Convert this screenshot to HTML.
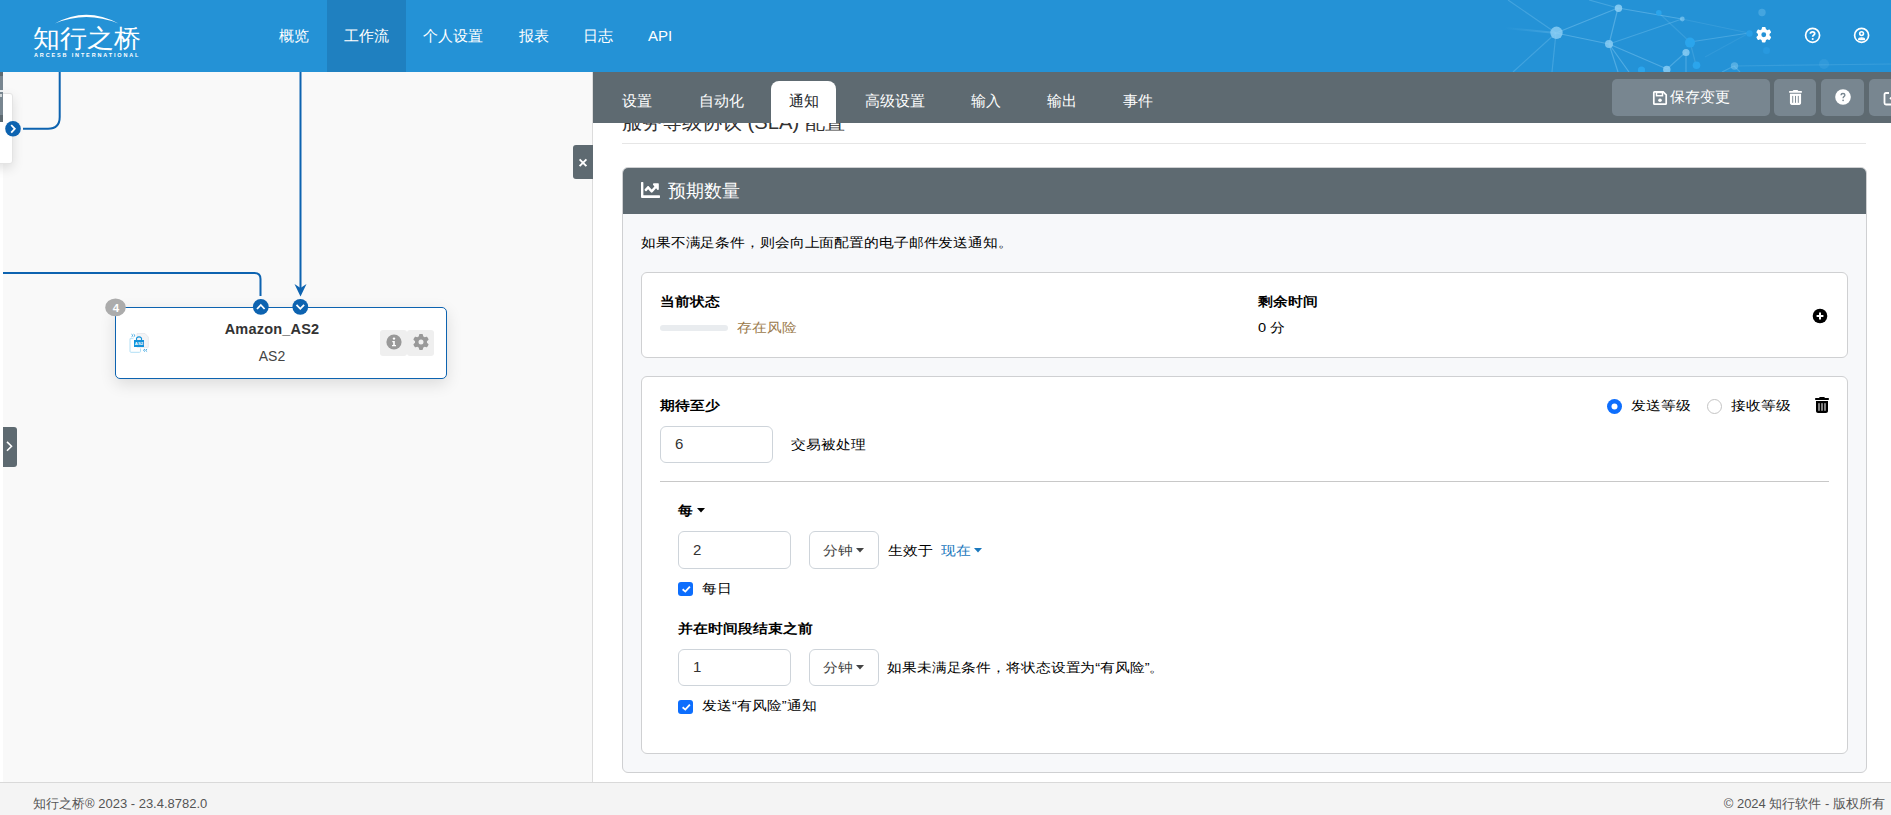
<!DOCTYPE html>
<html><head><meta charset="utf-8">
<style>
*{box-sizing:border-box;margin:0;padding:0}
html,body{width:1891px;height:815px;overflow:hidden;background:#fff;font-family:"Liberation Sans",sans-serif;color:#212529}
.a{position:absolute;white-space:nowrap}
#hdr{position:absolute;z-index:5;left:0;top:0;width:1891px;height:72px;background:#2492d6;overflow:hidden}
.nav{position:absolute;top:0;height:72px;line-height:71px;color:#fff;font-size:15px}
#left{position:absolute;left:0;top:71px;width:592px;height:711px;background:#f9f9f9;overflow:hidden}
#divider{position:absolute;left:592px;top:71px;width:1px;height:711px;background:#dcdcdc}
#right{position:absolute;left:593px;top:71px;width:1298px;height:711px;background:#fff;overflow:hidden}
#tabs{position:absolute;left:0;top:0;width:1298px;height:52px;background:#5e6a71}
.tab{position:absolute;top:0;height:52px;line-height:60px;color:#fff;font-size:14.6px}
.btn{position:absolute;top:8px;height:37px;background:#788690;border-radius:5px}
#footer{position:absolute;left:0;top:782px;width:1891px;height:33px;background:#f4f4f4;border-top:1px solid #d9d9d9;font-size:13px;color:#555;letter-spacing:0px}
.t14{font-size:14.6px;color:#000;transform:scaleY(0.88);transform-origin:0 17px}
.b{font-weight:bold}
.inp{position:absolute;border:1px solid #ced4da;border-radius:6px;background:#fff;font-size:15px}
.chk{position:absolute;width:14.5px;height:14px;border-radius:3px;background:#0d6efd}
</style></head><body>

<div id="hdr">
  <svg class="a" style="left:0;top:0" width="160" height="71" viewBox="0 0 160 71">
    <path d="M55 23.5 Q86 6 118.5 23.5 Q86 10.5 55 23.5Z" fill="#fff"/>
  </svg>
  <div class="a" style="left:33px;top:23px;font-size:26.5px;line-height:30px;color:#fff;letter-spacing:0px;transform:scaleY(0.93);transform-origin:0 26px">知行之桥</div>
  <div class="a" style="left:34px;top:51px;font-size:5.5px;line-height:8px;color:#fff;font-weight:bold;letter-spacing:1.85px">ARCESB INTERNATIONAL</div>
  <svg class="a" style="left:1480px;top:0" width="411" height="72" viewBox="1480 0 411 72">
    <defs>
      <linearGradient id="fl" x1="1" y1="0" x2="0" y2="0"><stop offset="0" stop-color="#8fd0f5" stop-opacity="0.3"/><stop offset="1" stop-color="#8fd0f5" stop-opacity="0"/></linearGradient>
    </defs>
    <g stroke="#8fd0f5" fill="none" stroke-width="1.2">
      <path d="M1556 33 L1508 0" stroke-opacity="0.28"/>
      <path d="M1556 33 L1505 28" stroke="url(#fl)" stroke-width="2"/>
      <path d="M1556 33 L1513 72" stroke-opacity="0.28"/>
      <path d="M1556 33 L1552 72" stroke-opacity="0.28"/>
      <path d="M1556 33 L1618 8 M1556 33 L1609 44 M1618 8 L1609 44" stroke-opacity="0.4"/>
      <path d="M1618 8 L1589 0" stroke-opacity="0.3"/>
      <path d="M1618 8 L1682 19" stroke-opacity="0.4"/>
      <path d="M1609 44 L1682 19" stroke-opacity="0.3"/>
      <path d="M1609 44 L1667 69 M1609 44 L1618 72 M1609 44 L1629 72" stroke-opacity="0.4"/>
      <path d="M1667 69 L1686 52 M1686 52 L1686 72" stroke-opacity="0.35"/>
      <path d="M1682 19 L1749 33" stroke-opacity="0.16"/>
      <path d="M1690 42 L1749 33" stroke-opacity="0.32"/>
      <path d="M1660 14 L1690 42" stroke-opacity="0.18"/>
      <path d="M1690 42 L1696 65" stroke-opacity="0.2"/>
      <path d="M1749 33 L1705 57" stroke-opacity="0.12"/>
      <path d="M1734 66 L1891 64" stroke-opacity="0.18"/>
      <path d="M1734 66 L1722 72 M1734 66 L1740 72" stroke-opacity="0.3"/>
    </g>
    <g fill="#8fd0f5">
      <circle cx="1556.5" cy="32.8" r="6.2" fill-opacity="0.8"/>
      <circle cx="1618.5" cy="8.3" r="3.7" fill-opacity="0.85"/>
      <circle cx="1609" cy="44" r="4" fill-opacity="0.8"/>
      <circle cx="1682.3" cy="19" r="2.4" fill-opacity="0.6"/>
      <circle cx="1686" cy="52.5" r="3.6" fill-opacity="0.8"/>
      <circle cx="1666.8" cy="69.5" r="3.7" fill-opacity="0.8"/>
      <circle cx="1734.5" cy="66" r="3.7" fill-opacity="0.45"/>
      <circle cx="1762" cy="12.5" r="3.7" fill-opacity="0.3"/>
      <circle cx="1824" cy="64" r="5" fill-opacity="0.12"/>
    </g>
    <g fill="#2ba5ec">
      <circle cx="1658.8" cy="12.8" r="2.8"/>
      <circle cx="1690" cy="42.6" r="5"/>
      <circle cx="1696.5" cy="65.3" r="3.8"/>
      <circle cx="1641.5" cy="70" r="3.6"/>
    </g>
    <g fill="#2a9fe6">
      <circle cx="1749.5" cy="33.5" r="3.2"/>
      <circle cx="1766.5" cy="50.5" r="3.5" fill="#2899df"/>
    </g>
  </svg>
  <svg class="a" style="left:1755.5px;top:27.3px" width="15.5" height="15.5" viewBox="0 0 512 512"><path fill="#fff" d="M495.9 166.6c3.2 8.7.5 18.4-6.4 24.6l-43.3 39.4c1.1 8.3 1.7 16.8 1.7 25.4s-.6 17.1-1.7 25.4l43.3 39.4c6.9 6.2 9.6 15.9 6.4 24.6-4.4 11.9-9.7 23.3-15.8 34.3l-4.7 8.1c-6.6 11-14 21.4-22.1 31.2-5.9 7.2-15.7 9.6-24.5 6.8l-55.7-17.7c-13.4 10.3-28.2 18.9-44 25.4l-12.5 57.1c-2 9.1-9 16.3-18.2 17.8-13.8 2.3-28 3.5-42.5 3.5s-28.7-1.2-42.5-3.5c-9.2-1.5-16.2-8.7-18.2-17.8l-12.5-57.1c-15.8-6.5-30.6-15.1-44-25.4L83.1 425.9c-8.8 2.8-18.6.3-24.5-6.8-8.1-9.8-15.5-20.2-22.1-31.2l-4.7-8.1c-6.1-11-11.4-22.4-15.8-34.3-3.2-8.7-.5-18.4 6.4-24.6l43.3-39.4C64.6 273.1 64 264.6 64 256s.6-17.1 1.7-25.4L22.4 191.2c-6.9-6.2-9.6-15.9-6.4-24.6 4.4-11.9 9.7-23.3 15.8-34.3l4.7-8.1c6.6-11 14-21.4 22.1-31.2 5.9-7.2 15.7-9.6 24.5-6.8l55.7 17.7c13.4-10.3 28.2-18.9 44-25.4l12.5-57.1c2-9.1 9-16.3 18.2-17.8C227.3 1.2 241.5 0 256 0s28.7 1.2 42.5 3.5c9.2 1.5 16.2 8.7 18.2 17.8l12.5 57.1c15.8 6.5 30.6 15.1 44 25.4l55.7-17.7c8.8-2.8 18.6-.3 24.5 6.8 8.1 9.8 15.5 20.2 22.1 31.2l4.7 8.1c6.1 11 11.4 22.4 15.8 34.3zM256 336a80 80 0 1 0 0-160 80 80 0 1 0 0 160z"/></svg>
  <svg class="a" style="left:1804px;top:27px" width="17" height="17" viewBox="0 0 17 17"><circle cx="8.6" cy="8.3" r="7" fill="none" stroke="#fff" stroke-width="1.7"/><path d="M6.4 6.7 Q6.4 4.9 8.6 4.9 Q10.7 4.9 10.7 6.6 Q10.7 7.6 9.5 8.2 Q8.7 8.6 8.7 9.8" fill="none" stroke="#fff" stroke-width="1.8"/><circle cx="8.7" cy="12" r="1.05" fill="#fff"/></svg>
  <svg class="a" style="left:1853px;top:27px" width="17" height="17" viewBox="0 0 17 17"><circle cx="8.6" cy="8.3" r="7" fill="none" stroke="#fff" stroke-width="1.7"/><circle cx="8.6" cy="6.6" r="1.9" fill="none" stroke="#fff" stroke-width="1.6"/><path d="M5.6 12.6 Q5.6 10.9 8.6 10.9 Q11.6 10.9 11.6 12.6 Z" fill="#fff" stroke="#fff" stroke-width="1.2" stroke-linejoin="round"/></svg>
  <div class="nav" style="left:327px;width:79px;background:#1f80c0"></div>
  <div class="nav" style="left:279px">概览</div>
  <div class="nav" style="left:344px">工作流</div>
  <div class="nav" style="left:423px">个人设置</div>
  <div class="nav" style="left:519px">报表</div>
  <div class="nav" style="left:583px">日志</div>
  <div class="nav" style="left:648px">API</div>
</div>

<div id="left">
  <div class="a" style="left:0;top:0;width:3px;height:711px;background:#fff"></div>
  <div class="a" style="left:-20px;top:22px;width:32.5px;height:71px;background:#fff;border:1px solid #e4e4e4;border-radius:3px;box-shadow:0 4px 12px rgba(0,0,0,0.12)"></div>
  <div class="a" style="left:0;top:0;width:2.5px;height:51px;background:#5e6a71"></div>
  <div class="a" style="left:0;top:5px;width:2.5px;height:39px;background:#788690"></div>
  <div class="a" style="left:0;top:19px;width:2.5px;height:2px;background:#e8ecee"></div><div class="a" style="left:0;top:23px;width:1.5px;height:3px;background:#cfd5d8"></div>
  <svg class="a" style="left:0;top:0" width="592" height="711" viewBox="0 71 592 711">
    <g fill="none" stroke="#0d63b0" stroke-width="2">
      <path d="M59.7 71 L59.7 117 Q59.7 128.7 48 128.7 L23 128.7"/>
      <path d="M300.5 71 L300.5 290"/>
      <path d="M3 273 L254.5 273 Q260.5 273 260.5 279 L260.5 296"/>
    </g>
    <path d="M294.5 284 L300.5 296.5 L306.5 284 L300.5 288Z" fill="#0d63b0"/>
    <circle cx="13" cy="128.8" r="7.8" fill="#0d63b0"/>
    <path d="M11.2 125 L14.8 128.8 L11.2 132.6" fill="none" stroke="#fff" stroke-width="1.8"/>
  </svg>
  <div class="a" style="left:115px;top:236px;width:332px;height:72px;background:#fff;border:1.5px solid #0d63b0;border-radius:5px;box-shadow:0 5px 16px rgba(0,0,0,0.12)"></div>
  <svg class="a" style="left:0;top:0" width="592" height="711" viewBox="0 71 592 711">
    <ellipse cx="115.5" cy="307.4" rx="10.3" ry="8.9" fill="#acacac"/>
    <circle cx="260.8" cy="306.8" r="7.9" fill="#0d63b0"/>
    <path d="M257 309 L260.8 305 L264.6 309" fill="none" stroke="#fff" stroke-width="1.8"/>
    <circle cx="300.3" cy="306.8" r="7.9" fill="#0d63b0"/>
    <path d="M296.5 304.8 L300.3 308.8 L304.1 304.8" fill="none" stroke="#fff" stroke-width="1.8"/>
  </svg>
  <div class="a" style="left:109px;top:228.5px;width:14px;text-align:center;font-size:11.5px;line-height:16px;color:#fff;font-weight:bold">4</div>
  <svg class="a" style="left:124px;top:257px" width="30" height="30" viewBox="0 0 30 30">
    <path d="M13 5.5 L21 5.5 L24.3 9 L24.3 19.3 L13 19.3Z" fill="#f3f4f6" stroke="#e6e8ec" stroke-width="0.9"/>
    <path d="M6 10.6 L6 23.3 Q6 24.3 7 24.3 L15.5 24.3 Q16.5 24.3 16.5 23.3 L16.5 20.5" fill="none" stroke="#a9dbf4" stroke-width="0.9"/>
    <path d="M6 10.6 L9.5 10.6" fill="none" stroke="#a9dbf4" stroke-width="0.8"/>
    <rect x="10" y="12" width="10" height="7" fill="#1392da"/>
    <path d="M12.5 12 L12.5 10.2 Q15 7.6 17.5 10.2 L17.5 12" fill="none" stroke="#1392da" stroke-width="1.1"/>
    <text x="15" y="16.8" font-size="4.3" fill="#fff" text-anchor="middle" font-family="Liberation Sans" font-weight="bold">AS2</text>
    <path d="M7.5 6.2 L9 7.5 L7.5 8.8 M9.6 6.2 L11.1 7.5 L9.6 8.8" fill="none" stroke="#1a96dc" stroke-width="0.8"/>
    <path d="M21 21 L19.5 22.3 L21 23.6 M23.1 21 L21.6 22.3 L23.1 23.6" fill="none" stroke="#1a96dc" stroke-width="0.8"/>
  </svg>
  <div class="a" style="left:117px;top:248.5px;width:310px;text-align:center;font-size:14.5px;line-height:18px;font-weight:bold;color:#333;letter-spacing:0.2px">Amazon_AS2</div>
  <div class="a" style="left:117px;top:275.5px;width:310px;text-align:center;font-size:14px;line-height:18px;color:#444">AS2</div>
  <div class="a" style="left:380px;top:259px;width:26.8px;height:26px;background:#efefef;border-radius:3px"></div>
  <div class="a" style="left:407.2px;top:259px;width:26.6px;height:26px;background:#efefef;border-radius:3px"></div>
  <svg class="a" style="left:386px;top:262.8px" width="16" height="16" viewBox="0 0 16 16"><circle cx="8" cy="8" r="7.6" fill="#999"/><circle cx="8" cy="4.6" r="1.2" fill="#fff"/><path d="M6.3 7 L8.8 7 L8.8 11 L10 11 L10 12.2 L6 12.2 L6 11 L7.2 11 L7.2 8.2 L6.3 8.2Z" fill="#fff"/></svg>
  <svg class="a" style="left:413px;top:262.8px" width="16" height="16" viewBox="0 0 512 512"><path fill="#999" d="M495.9 166.6c3.2 8.7.5 18.4-6.4 24.6l-43.3 39.4c1.1 8.3 1.7 16.8 1.7 25.4s-.6 17.1-1.7 25.4l43.3 39.4c6.9 6.2 9.6 15.9 6.4 24.6-4.4 11.9-9.7 23.3-15.8 34.3l-4.7 8.1c-6.6 11-14 21.4-22.1 31.2-5.900 7.2-15.7 9.6-24.5 6.8l-55.7-17.7c-13.4 10.3-28.2 18.9-44 25.4l-12.5 57.1c-2 9.1-9 16.3-18.2 17.8-13.8 2.3-28 3.5-42.5 3.5s-28.7-1.2-42.5-3.5c-9.2-1.5-16.2-8.7-18.2-17.8l-12.5-57.1c-15.8-6.5-30.6-15.1-44-25.4L83.1 425.9c-8.8 2.8-18.6.3-24.5-6.8-8.1-9.8-15.5-20.2-22.1-31.2l-4.7-8.1c-6.1-11-11.4-22.4-15.8-34.3-3.2-8.7-.5-18.4 6.4-24.6l43.3-39.4C64.6 273.1 64 264.6 64 256s.6-17.1 1.7-25.4L22.4 191.2c-6.9-6.2-9.6-15.9-6.400-24.6 4.4-11.9 9.7-23.3 15.8-34.3l4.7-8.1c6.6-11 14-21.4 22.1-31.2 5.9-7.2 15.7-9.6 24.5-6.8l55.7 17.7c13.4-10.3 28.2-18.9 44-25.4l12.5-57.1c2-9.1 9-16.3 18.2-17.8C227.3 1.2 241.5 0 256 0s28.7 1.2 42.5 3.5c9.2 1.5 16.2 8.7 18.2 17.8l12.5 57.1c15.8 6.5 30.6 15.1 44 25.4l55.7-17.7c8.8-2.8 18.6-.3 24.5 6.8 8.1 9.8 15.5 20.2 22.1 31.2l4.7 8.1c6.1 11 11.4 22.4 15.8 34.3zM256 336a80 80 0 1 0 0-160 80 80 0 1 0 0 160z"/></svg>
  <div class="a" style="left:3px;top:356px;width:14px;height:40px;background:#5e6a71;border-radius:0 3px 3px 0"></div>
  <svg class="a" style="left:3px;top:356px" width="14" height="40" viewBox="0 0 14 40"><path d="M4 14.9 L8.5 19.3 L4 23.7" fill="none" stroke="#fff" stroke-width="1.6"/></svg>
</div>
<div id="divider"></div>
<div class="a" style="z-index:3;left:573px;top:145px;width:20px;height:34px;background:#5e6a71;border-radius:3px 0 0 3px"></div>
<svg class="a" style="z-index:4;left:573px;top:145px" width="20" height="34" viewBox="0 0 20 34"><path d="M6.6 14.3 L13.4 21.1 M13.4 14.3 L6.6 21.1" stroke="#fff" stroke-width="1.9"/></svg>

<div id="right">

  <div class="a" style="left:29px;top:37px;font-size:20.2px;line-height:28px;color:#333">服务等级协议 (SLA) 配置</div>
  <div class="a" style="left:29px;top:72px;width:1244px;height:1px;background:#e6e6e6"></div>
  <div class="a" style="left:29px;top:96px;width:1245px;height:606px;background:#f7f8fa;border:1px solid #cfd0d2;border-radius:6px;overflow:hidden">
    <div class="a" style="left:0;top:0;width:1245px;height:46px;background:#5e6a71"></div>
  </div>
  <svg class="a" style="left:48px;top:111px" width="19" height="16" viewBox="0 64 512 384" preserveAspectRatio="none"><path fill="#fff" d="M496 384H64V80c0-8.84-7.160-16-16-16H16C7.16 64 0 71.16 0 80v336c0 17.67 14.33 32 32 32h464c8.84 0 16-7.16 16-16v-32c0-8.84-7.16-16-16-16zM464 96H345.94c-21.38 0-32.09 25.85-16.97 40.97l32.4 32.4L288 242.75l-73.37-73.37c-12.5-12.5-32.76-12.5-45.25 0l-68.69 68.69c-6.25 6.25-6.25 16.38 0 22.63l22.62 22.62c6.25 6.25 16.38 6.25 22.63 0L192 237.25l73.37 73.37c12.5 12.5 32.76 12.5 45.25 0l96-96 32.4 32.4c15.120 15.12 40.97 4.41 40.97-16.97V112c.01-8.84-7.150-16-15.99-16z"/></svg>
  <div class="a" style="left:75px;top:107px;font-size:18px;line-height:26px;color:#fff">预期数量</div>
  <div class="a t14" style="left:48px;top:161px;line-height:20px;letter-spacing:-0.13px">如果不满足条件，则会向上面配置的电子邮件发送通知。</div>

  <div class="a" style="left:48px;top:201px;width:1207px;height:86px;background:#fff;border:1px solid #cfd0d2;border-radius:6px"></div>
  <div class="a t14 b" style="left:67px;top:220px;line-height:20px">当前状态</div>
  <div class="a" style="left:67px;top:254px;width:68px;height:6px;background:#e9ecef;border-radius:3px"></div>
  <div class="a t14" style="left:144px;top:246px;line-height:20px;color:#9b7a4c">存在风险</div>
  <div class="a t14 b" style="left:665px;top:220px;line-height:20px">剩余时间</div>
  <div class="a t14" style="left:665px;top:246px;line-height:20px">0 分</div>
  <svg class="a" style="left:1219.3px;top:237.3px" width="16" height="16" viewBox="0 0 16 16"><circle cx="8" cy="8" r="7.3" fill="#000"/><path d="M8 4.6 L8 11.4 M4.6 8 L11.4 8" stroke="#fff" stroke-width="2"/></svg>

  <div class="a" style="left:48px;top:305px;width:1207px;height:378px;background:#fff;border:1px solid #cfd0d2;border-radius:6px"></div>
  <div class="a t14 b" style="left:67px;top:324px;line-height:20px">期待至少</div>
  <div class="inp" style="left:67px;top:355px;width:113px;height:37px"></div>
  <div class="a" style="left:82px;top:363px;font-size:15px;line-height:20px;color:#333">6</div>
  <div class="a t14" style="left:198px;top:363px;line-height:20px">交易被处理</div>
  <svg class="a" style="left:1013px;top:327px" width="17" height="17" viewBox="0 0 17 17"><circle cx="8.5" cy="8.5" r="7.5" fill="#0d6efd"/><circle cx="8.5" cy="8.5" r="3" fill="#fff"/></svg>
  <div class="a t14" style="left:1038px;top:324px;line-height:20px">发送等级</div>
  <svg class="a" style="left:1113px;top:327px" width="17" height="17" viewBox="0 0 17 17"><circle cx="8.5" cy="8.5" r="7" fill="#fff" stroke="#c4c4c4" stroke-width="1"/></svg>
  <div class="a t14" style="left:1138px;top:324px;line-height:20px">接收等级</div>
  <svg class="a" style="left:1222px;top:326px" width="14" height="16" viewBox="0 0 448 512"><path fill="#000" d="M135.2 17.7C140.6 6.8 151.7 0 163.8 0L284.2 0c12.1 0 23.2 6.8 28.6 17.7L320 32l96 0c17.7 0 32 14.3 32 32s-14.3 32-32 32L32 96C14.3 96 0 81.7 0 64S14.3 32 32 32l96 0 7.2-14.3zM32 128l384 0 0 320c0 35.3-28.7 64-64 64L96 512c-35.3 0-64-28.7-64-64l0-320zm96 64c-8.8 0-16 7.2-16 16l0 224c0 8.8 7.2 16 16 16s16-7.2 16-16l0-224c0-8.800-7.2-16-16-16zm96 0c-8.8 0-16 7.2-16 16l0 224c0 8.8 7.2 16 16 16s16-7.2 16-16l0-224c0-8.8-7.2-16-16-16zm96 0c-8.8 0-16 7.2-16 16l0 224c0 8.8 7.2 16 16 16s16-7.2 16-16l0-224c0-8.8-7.2-16-16-16z"/></svg>
  <div class="a" style="left:67px;top:410px;width:1169px;height:1px;background:#c8c8c8"></div>

  <div class="a t14 b" style="left:85px;top:429px;line-height:20px">每</div>
  <svg class="a" style="left:104px;top:437px" width="8" height="5" viewBox="0 0 8 5"><path d="M0 0 L8 0 L4 4.5Z" fill="#000"/></svg>
  <div class="inp" style="left:85px;top:460px;width:113px;height:38px"></div>
  <div class="a" style="left:100px;top:469px;font-size:15px;line-height:20px;color:#333">2</div>
  <div class="inp" style="left:216px;top:460px;width:70px;height:38px"></div>
  <div class="a t14" style="left:230px;top:468.5px;line-height:20px;color:#444">分钟</div>
  <svg class="a" style="left:263px;top:477px" width="8" height="5" viewBox="0 0 8 5"><path d="M0 0 L8 0 L4 4.5Z" fill="#444"/></svg>
  <div class="a t14" style="left:295px;top:468.5px;line-height:20px">生效于</div>
  <div class="a t14" style="left:348px;top:468.5px;line-height:20px;color:#1a78bd">现在</div>
  <svg class="a" style="left:381px;top:477px" width="8" height="5" viewBox="0 0 8 5"><path d="M0 0 L8 0 L4 4.5Z" fill="#1a78bd"/></svg>
  <div class="chk" style="left:85px;top:511px"></div>
  <svg class="a" style="left:85px;top:511px" width="15" height="15" viewBox="0 0 15 15"><path d="M4.6 7.3 L7.3 9.6 L11.9 4.6" fill="none" stroke="#fff" stroke-width="1.8"/></svg>
  <div class="a t14" style="left:109px;top:507px;line-height:20px">每日</div>

  <div class="a t14 b" style="left:85px;top:547px;line-height:20px">并在时间段结束之前</div>
  <div class="inp" style="left:85px;top:578px;width:113px;height:37px"></div>
  <div class="a" style="left:100px;top:586px;font-size:15px;line-height:20px;color:#333">1</div>
  <div class="inp" style="left:216px;top:578px;width:70px;height:37px"></div>
  <div class="a t14" style="left:230px;top:585.5px;line-height:20px;color:#444">分钟</div>
  <svg class="a" style="left:263px;top:594px" width="8" height="5" viewBox="0 0 8 5"><path d="M0 0 L8 0 L4 4.5Z" fill="#444"/></svg>
  <div class="a t14" style="left:294px;top:585.5px;line-height:20px;letter-spacing:-0.12px">如果未满足条件，将状态设置为“有风险”。</div>
  <div class="chk" style="left:85px;top:628.5px"></div>
  <svg class="a" style="left:85px;top:628.5px" width="15" height="15" viewBox="0 0 15 15"><path d="M4.6 7.3 L7.3 9.6 L11.9 4.6" fill="none" stroke="#fff" stroke-width="1.8"/></svg>
  <div class="a t14" style="left:109px;top:624px;line-height:20px">发送“有风险”通知</div>
  <div id="tabs">
    <div class="tab" style="left:29px">设置</div>
    <div class="tab" style="left:106px">自动化</div>
    <div style="position:absolute;left:178px;top:10px;width:65px;height:42px;background:#fff;border-radius:8px 8px 0 0"></div>
    <div class="tab" style="left:196px;color:#212529">通知</div>
    <div class="tab" style="left:272px">高级设置</div>
    <div class="tab" style="left:378px">输入</div>
    <div class="tab" style="left:454px">输出</div>
    <div class="tab" style="left:530px">事件</div>
    <div class="btn" style="left:1019px;width:158px"></div>
    <div class="btn" style="left:1181px;width:42px"></div>
    <div class="btn" style="left:1228px;width:43px"></div>
    <div class="btn" style="left:1276px;width:43px"></div>
    <svg class="a" style="left:1059px;top:19px" width="16" height="16" viewBox="0 0 16 16"><path d="M2.5 1.8 L11.2 1.8 L14.2 4.8 L14.2 13.5 Q14.2 14.2 13.5 14.2 L2.5 14.2 Q1.8 14.2 1.8 13.5 L1.8 2.5 Q1.8 1.8 2.5 1.8Z" fill="none" stroke="#fff" stroke-width="1.7"/><rect x="4.5" y="2.5" width="6" height="3.2" fill="none" stroke="#fff" stroke-width="1.5"/><circle cx="8" cy="10.3" r="1.8" fill="#fff"/></svg>
    <div class="a" style="left:1077px;top:16px;font-size:14.8px;line-height:20px;color:#fff">保存变更</div>
    <svg class="a" style="left:1196px;top:19px" width="13" height="15" viewBox="0 0 448 512"><path fill="#fff" d="M135.2 17.7C140.600 6.800 151.700 0 163.800 0L284.200 0c12.100 0 23.200 6.800 28.600 17.700L320 32l96 0c17.700 0 32 14.300 32 32s-14.300 32-32 32L32 96C14.300 96 0 81.700 0 64S14.300 32 32 32l96 0 7.200-14.300zM32 128l384 0 0 320c0 35.300-28.700 64-64 64L96 512c-35.300 0-64-28.700-64-64l0-320zm96 64c-8.800 0-16 7.200-16 16l0 224c0 8.800 7.200 16 16 16s16-7.200 16-16l0-224c0-8.800-7.200-16-16-16zm96 0c-8.800 0-16 7.200-16 16l0 224c0 8.800 7.200 16 16 16s16-7.200 16-16l0-224c0-8.800-7.200-16-16-16zm96 0c-8.800 0-16 7.200-16 16l0 224c0 8.800 7.200 16 16 16s16-7.200 16-16l0-224c0-8.800-7.200-16-16-16z"/></svg>
    <svg class="a" style="left:1241.5px;top:18.3px" width="16" height="16" viewBox="0 0 16 16"><circle cx="8" cy="8" r="7.8" fill="#fff"/><path d="M6.1 6.3 Q6.1 4.5 8 4.5 Q9.9 4.5 9.9 6.1 Q9.9 7.1 8.9 7.6 Q8.1 8.1 8.1 9.2" fill="none" stroke="#788690" stroke-width="1.35"/><circle cx="8.1" cy="11.3" r="0.85" fill="#788690"/></svg>
    <svg class="a" style="left:1290px;top:19px" width="16" height="16" viewBox="0 0 16 16"><path d="M6 3 L3 3 Q1.5 3 1.5 4.5 L1.5 13 Q1.5 14.5 3 14.5 L11.5 14.5 Q13 14.5 13 13 L13 10" fill="none" stroke="#fff" stroke-width="1.8"/><path d="M7 9 L14 2 M9.5 1.5 L14.5 1.5 L14.5 6.5" fill="none" stroke="#fff" stroke-width="1.8"/></svg>
  </div>
</div>

<div id="footer">
  <div class="a" style="left:33px;top:12px">知行之桥® 2023 - 23.4.8782.0</div>
  <div class="a" style="right:6px;top:12px">© 2024 知行软件 - 版权所有</div>
</div>
</body></html>
